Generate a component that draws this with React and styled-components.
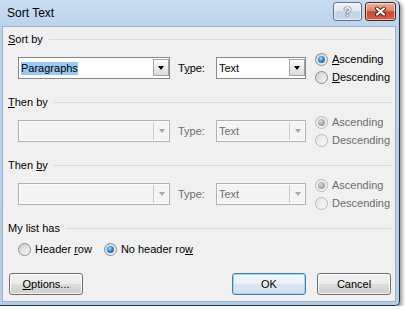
import React from 'react';
import styled, { createGlobalStyle } from 'styled-components';

const Global = createGlobalStyle`
  html, body { margin: 0; padding: 0; background: #ffffff; }
  body {
    font-family: "Liberation Sans", Arial, sans-serif;
    font-size: 11px;
    color: #000;
  }
  u { text-underline-offset: 1px; }
`;

const Window = styled.div`
  width: 399px;
  height: 305px;
  display: flex;
  flex-direction: column;
  background: linear-gradient(to bottom, #c9ddf2 0px, #bcd3ec 26px, #b6cee8 100%);
  border-right: 1px solid #24313f;
  border-bottom: 1px solid #24313f;
  border-bottom-right-radius: 5px;
  border-top-right-radius: 6px;
  box-shadow: 2px 2px 4px rgba(0, 0, 0, 0.45);
`;

const TitleBar = styled.div`
  height: 26px;
  display: flex;
  align-items: flex-start;
  padding: 0 3px 0 7px;
  box-sizing: border-box;
`;

const Title = styled.div`
  flex: 1;
  font-size: 12px;
  line-height: 26px;
  color: #000;
`;

const CaptionButton = styled.div`
  margin-top: 2px;
  width: ${p => p.$w}px;
  height: 19px;
  box-sizing: border-box;
  border-radius: 3px;
  border: 1px solid ${p => (p.$close ? '#5e2016' : '#5f6f86')};
  background: ${p =>
    p.$close
      ? 'linear-gradient(to bottom, #eab3a7 0%, #de8470 45%, #c74a31 52%, #d0644a 100%)'
      : 'linear-gradient(to bottom, #f1f5fb 0%, #dde7f3 45%, #c4d4e8 52%, #c9d8ea 100%)'};
  box-shadow: inset 0 0 0 1px rgba(255, 255, 255, 0.55);
  display: flex;
  align-items: center;
  justify-content: center;
  margin-left: ${p => p.$ml || 0}px;
`;

const HelpGlyph = styled.span`
  font-family: "Liberation Sans", Arial, sans-serif;
  font-weight: bold;
  font-size: 13px;
  line-height: 13px;
  color: #fff;
  text-shadow: 0 0 1px #2a3a4e, 0 0 1px #2a3a4e, 0 0 1px #2a3a4e;
`;

const Client = styled.div`
  flex: 1;
  margin: 0 3px 3px 2px;
  background: #f0f0f0;
  border: 1px solid #9db2c9;
  padding: 5px 4px 0 5px;
  display: flex;
  flex-direction: column;
`;

const Header = styled.div`
  height: 14px;
  display: flex;
  align-items: center;
  gap: 6px;
  line-height: 14px;
  margin-top: ${p => p.$mt || 0}px;
`;

const Rule = styled.div`
  flex: 1;
  height: 1px;
  background: #d3dce4;
`;

const Row = styled.div`
  height: 36px;
  margin-top: 4px;
  margin-bottom: 9px;
  padding-left: 10px;
  display: flex;
  align-items: center;
`;

const Combo = styled.div`
  width: ${p => p.$w}px;
  height: 22px;
  box-sizing: border-box;
  border: 1px solid ${p => (p.$disabled ? '#b2b2b2' : '#848890')};
  background: ${p => (p.$disabled ? '#f4f4f4' : '#ffffff')};
  box-shadow: ${p => (p.$disabled ? 'inset 0 0 0 1px #fbfbfb' : 'none')};
  display: flex;
  align-items: stretch;
`;

const ComboText = styled.div`
  flex: 1;
  padding-left: 2px;
  display: flex;
  align-items: center;
  color: ${p => (p.$disabled ? '#6d6d6d' : '#000')};
`;

const Selected = styled.span`
  background: #99c9f4;
  height: 13px;
  line-height: 13px;
`;

const DropButton = styled.div`
  width: 16px;
  box-sizing: border-box;
  display: flex;
  align-items: center;
  justify-content: center;
  ${p =>
    p.$disabled
      ? `border-left: 1px solid #c9c9c9; margin: 1px 0;`
      : `margin: 1px 0 2px 0;
         border: 1px solid #a2a2a6;
         background: linear-gradient(to bottom, #fdfdfd 0%, #ececec 50%, #dcdcdc 100%);`}
`;

const Arrow = styled.span`
  width: 0;
  height: 0;
  border-left: 3.5px solid transparent;
  border-right: 3.5px solid transparent;
  border-top: 4px solid ${p => (p.$disabled ? '#a8a8a8' : '#000')};
`;

const TypeLabel = styled.div`
  width: 38px;
  margin-left: 8px;
  color: ${p => (p.$disabled ? '#6d6d6d' : '#000')};
`;

const RadioGroup = styled.div`
  margin-left: 9px;
  display: flex;
  flex-direction: column;
`;

const RadioRow = styled.label`
  height: ${p => p.$h || 18}px;
  display: flex;
  align-items: center;
  gap: 4px;
  color: ${p => (p.$disabled ? '#6d6d6d' : '#000')};
`;

const Radio = styled.span`
  position: relative;
  width: 13px;
  height: 13px;
  box-sizing: border-box;
  border-radius: 50%;
  border: 1px solid ${p => (p.$disabled ? '#b9b9b9' : '#8b8b8b')};
  background: ${p =>
    p.$disabled
      ? 'linear-gradient(135deg, #e4e4e4, #f7f7f7)'
      : 'linear-gradient(135deg, #cdcdcd, #f9f9f9)'};
  flex: none;
  &::after {
    content: '';
    display: ${p => (p.$checked ? 'block' : 'none')};
    position: absolute;
    left: 2px;
    top: 2px;
    width: 7px;
    height: 7px;
    border-radius: 50%;
    background: ${p =>
      p.$disabled
        ? 'radial-gradient(circle at 40% 35%, #d8d8d8 0%, #9a9a9a 70%, #8a8a8a 100%)'
        : 'radial-gradient(circle at 40% 35%, #a6e0ff 0%, #2f86cf 45%, #134e8c 100%)'};
  }
`;

const ListRow = styled.div`
  height: 14px;
  margin-top: 7px;
  padding-left: 10px;
  display: flex;
  align-items: center;
  gap: 12px;
`;

const ButtonRow = styled.div`
  margin-top: 17px;
  padding-left: 1px;
  display: flex;
  align-items: center;
`;

const Spacer = styled.div`
  flex: 1;
`;

const Button = styled.div`
  width: 74px;
  height: 22px;
  box-sizing: border-box;
  border-radius: 3px;
  border: 1px solid ${p => (p.$default ? '#3c7fb1' : '#707070')};
  background: ${p =>
    p.$default
      ? 'linear-gradient(to bottom, #f3f8fb 0%, #e8f0f6 50%, #dbe6ef 50%, #d2dfe9 100%)'
      : 'linear-gradient(to bottom, #f3f3f3 0%, #ebebeb 50%, #dddddd 50%, #cfcfcf 100%)'};
  box-shadow: ${p =>
    p.$default ? 'inset 0 0 0 1px #9fd5f3' : 'inset 0 0 0 1px rgba(255,255,255,0.75)'};
  display: flex;
  align-items: center;
  justify-content: center;
  margin-left: ${p => p.$ml || 0}px;
`;

function CloseIcon() {
  return (
    <svg width="13" height="11" viewBox="0 0 13 11">
      <path d="M3 2.5 L10 8.5 M10 2.5 L3 8.5" stroke="#4a1a12" strokeWidth="4" strokeLinecap="round" />
      <path d="M3 2.5 L10 8.5 M10 2.5 L3 8.5" stroke="#ffffff" strokeWidth="2.2" strokeLinecap="round" />
    </svg>
  );
}

function ComboBox({ w, disabled, children }) {
  return (
    <Combo $w={w} $disabled={disabled}>
      <ComboText $disabled={disabled}>{children}</ComboText>
      <DropButton $disabled={disabled}>
        <Arrow $disabled={disabled} />
      </DropButton>
    </Combo>
  );
}

function SortRow({ disabled, first }) {
  return (
    <Row>
      <ComboBox w={152} disabled={disabled}>
        {first ? <Selected>Paragraphs</Selected> : null}
      </ComboBox>
      <TypeLabel $disabled={disabled}>
        {disabled ? 'Type:' : <>T<u>y</u>pe:</>}
      </TypeLabel>
      <ComboBox w={90} disabled={disabled}>Text</ComboBox>
      <RadioGroup>
        <RadioRow $disabled={disabled}>
          <Radio $checked $disabled={disabled} />
          {disabled ? 'Ascending' : <span><u>A</u>scending</span>}
        </RadioRow>
        <RadioRow $disabled={disabled}>
          <Radio $disabled={disabled} />
          {disabled ? 'Descending' : <span><u>D</u>escending</span>}
        </RadioRow>
      </RadioGroup>
    </Row>
  );
}

export default function App() {
  return (
    <>
      <Global />
      <Window>
        <TitleBar>
          <Title>Sort Text</Title>
          <CaptionButton $w={29}>
            <HelpGlyph>?</HelpGlyph>
          </CaptionButton>
          <CaptionButton $w={31} $close $ml={3}>
            <CloseIcon />
          </CaptionButton>
        </TitleBar>
        <Client>
          <Header>
            <span><u>S</u>ort by</span>
            <Rule />
          </Header>
          <SortRow first />
          <Header>
            <span><u>T</u>hen by</span>
            <Rule />
          </Header>
          <SortRow disabled />
          <Header>
            <span>Then <u>b</u>y</span>
            <Rule />
          </Header>
          <SortRow disabled />
          <Header>
            <span>My list has</span>
            <Rule />
          </Header>
          <ListRow>
            <RadioRow $h={14}>
              <Radio />
              <span>Header <u>r</u>ow</span>
            </RadioRow>
            <RadioRow $h={14}>
              <Radio $checked />
              <span>No header ro<u>w</u></span>
            </RadioRow>
          </ListRow>
          <ButtonRow>
            <Button><span><u>O</u>ptions...</span></Button>
            <Spacer />
            <Button $default>OK</Button>
            <Button $ml={11}>Cancel</Button>
          </ButtonRow>
        </Client>
      </Window>
    </>
  );
}
